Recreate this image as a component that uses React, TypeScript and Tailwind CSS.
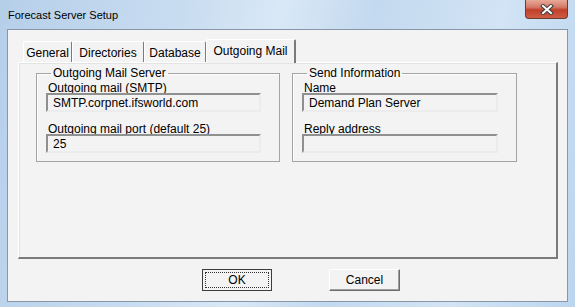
import React from "react";

function Field({ label, value, width }: { label: string; value: string; width: string }) {
  return (
    <div className="flex flex-col">
      <div className="h-[12px] overflow-hidden leading-[14px] pl-[2px]">{label}</div>
      <div
        className={`${width} h-[19px] flex items-center pl-[5px] border-2 border-t-[#8f9090] border-l-[#8f9090] border-r-[#ececec] border-b-[#ececec] bg-[#f3f3f3] leading-[14px]`}
      >
        {value}
      </div>
    </div>
  );
}

function Tab({ label, width, selected }: { label: string; width: string; selected?: boolean }) {
  if (selected) {
    return (
      <div
        className={`${width} relative z-10 h-[24px] -mb-[1px] flex justify-center pt-[4px] bg-[#f3f3f3] border-t border-l border-white border-r-2 border-r-[#7a7a7a] rounded-t-[2px] leading-[14px]`}
      >
        {label}
      </div>
    );
  }
  return (
    <div
      className={`${width} h-[21px] flex justify-center pt-[4px] bg-[#f3f3f3] border-t border-l border-white border-r border-r-[#7a7a7a] rounded-t-[2px] leading-[14px]`}
    >
      {label}
    </div>
  );
}

export default function App() {
  return (
    <div className="w-[575px] h-[307px] flex flex-col bg-[linear-gradient(100deg,#b6cfe9_0%,#c9ddf1_30%,#d9e8f6_45%,#c3d9ef_60%,#d2e4f5_80%,#bcd5ee_100%)] font-['Liberation_Sans',Arial,sans-serif] text-[12px] text-black overflow-hidden">
      {/* title bar */}
      <div className="h-[29px] flex justify-between shrink-0">
        <div className="pl-[8px] pt-[8px] text-[11px] leading-[14px] text-black">Forecast Server Setup</div>
        <div className="mr-[7px] w-[43px] h-[19px] rounded-b-[4px] border border-t-0 border-[#6e3b33] bg-[linear-gradient(180deg,#e9a999_0%,#d47a66_40%,#c0402a_55%,#cf5c44_100%)] flex items-center justify-center">
          <svg width="14" height="11" viewBox="0 0 14 11">
            <path d="M3 2 L11 9 M11 2 L3 9" stroke="#3b3b3b" strokeWidth="4" strokeLinecap="square" />
            <path d="M3 2 L11 9 M11 2 L3 9" stroke="#ffffff" strokeWidth="2" strokeLinecap="square" />
          </svg>
        </div>
      </div>

      {/* client area */}
      <div className="mx-[7px] h-[273px] border border-[#8796a8] bg-[#f3f3f3] flex flex-col">
        <div className="ml-[10px] mt-[9px] w-[540px] flex flex-col">
          {/* tab row */}
          <div className="h-[23px] flex items-end pl-[5px]">
            <Tab label="General" width="w-[49px]" />
            <Tab label="Directories" width="w-[72px]" />
            <Tab label="Database" width="w-[62px]" />
            <Tab label="Outgoing Mail" width="w-[90px]" selected />
          </div>
          {/* panel */}
          <div className="h-[197px] border-t border-l border-white border-r-2 border-b-2 border-r-[#7a7a7a] border-b-[#7a7a7a] shadow-[inset_1px_1px_0_#e3e3e3] flex items-start gap-[12px] pl-[17px] pt-[3px]">
            <fieldset className="w-[244px] h-[96px] border border-[#a3a3a3] shadow-[inset_1px_1px_0_#ffffff] pl-[9px]">
              <legend className="ml-[5px] px-[2px] leading-[14px]">Outgoing Mail Server</legend>
              <div className="mt-[1px] flex flex-col gap-[10px]">
                <Field label="Outgoing mail (SMTP)" value="SMTP.corpnet.ifsworld.com" width="w-[215px]" />
                <Field label="Outgoing mail port (default 25)" value="25" width="w-[215px]" />
              </div>
            </fieldset>
            <fieldset className="w-[225px] h-[96px] border border-[#a3a3a3] shadow-[inset_1px_1px_0_#ffffff] pl-[9px]">
              <legend className="ml-[5px] px-[2px] leading-[14px]">Send Information</legend>
              <div className="mt-[1px] flex flex-col gap-[10px]">
                <Field label="Name" value="Demand Plan Server" width="w-[196px]" />
                <Field label="Reply address" value="" width="w-[196px]" />
              </div>
            </fieldset>
          </div>
        </div>

        {/* buttons */}
        <div className="mt-[10px] flex items-start pl-[194px] gap-[57px]">
          <div className="w-[70px] h-[22px] border border-[#3c3c3c] bg-[#f3f3f3] p-[2px]">
            <div className="h-full border border-dotted border-[#333] flex items-center justify-center leading-[14px]">
              OK
            </div>
          </div>
          <div className="w-[71px] h-[22px] border border-t-white border-l-white border-r-[#6d6d6d] border-b-[#6d6d6d] shadow-[inset_-1px_-1px_0_#a0a0a0] bg-[#f3f3f3] flex items-center justify-center leading-[14px]">
            Cancel
          </div>
        </div>
      </div>
    </div>
  );
}
